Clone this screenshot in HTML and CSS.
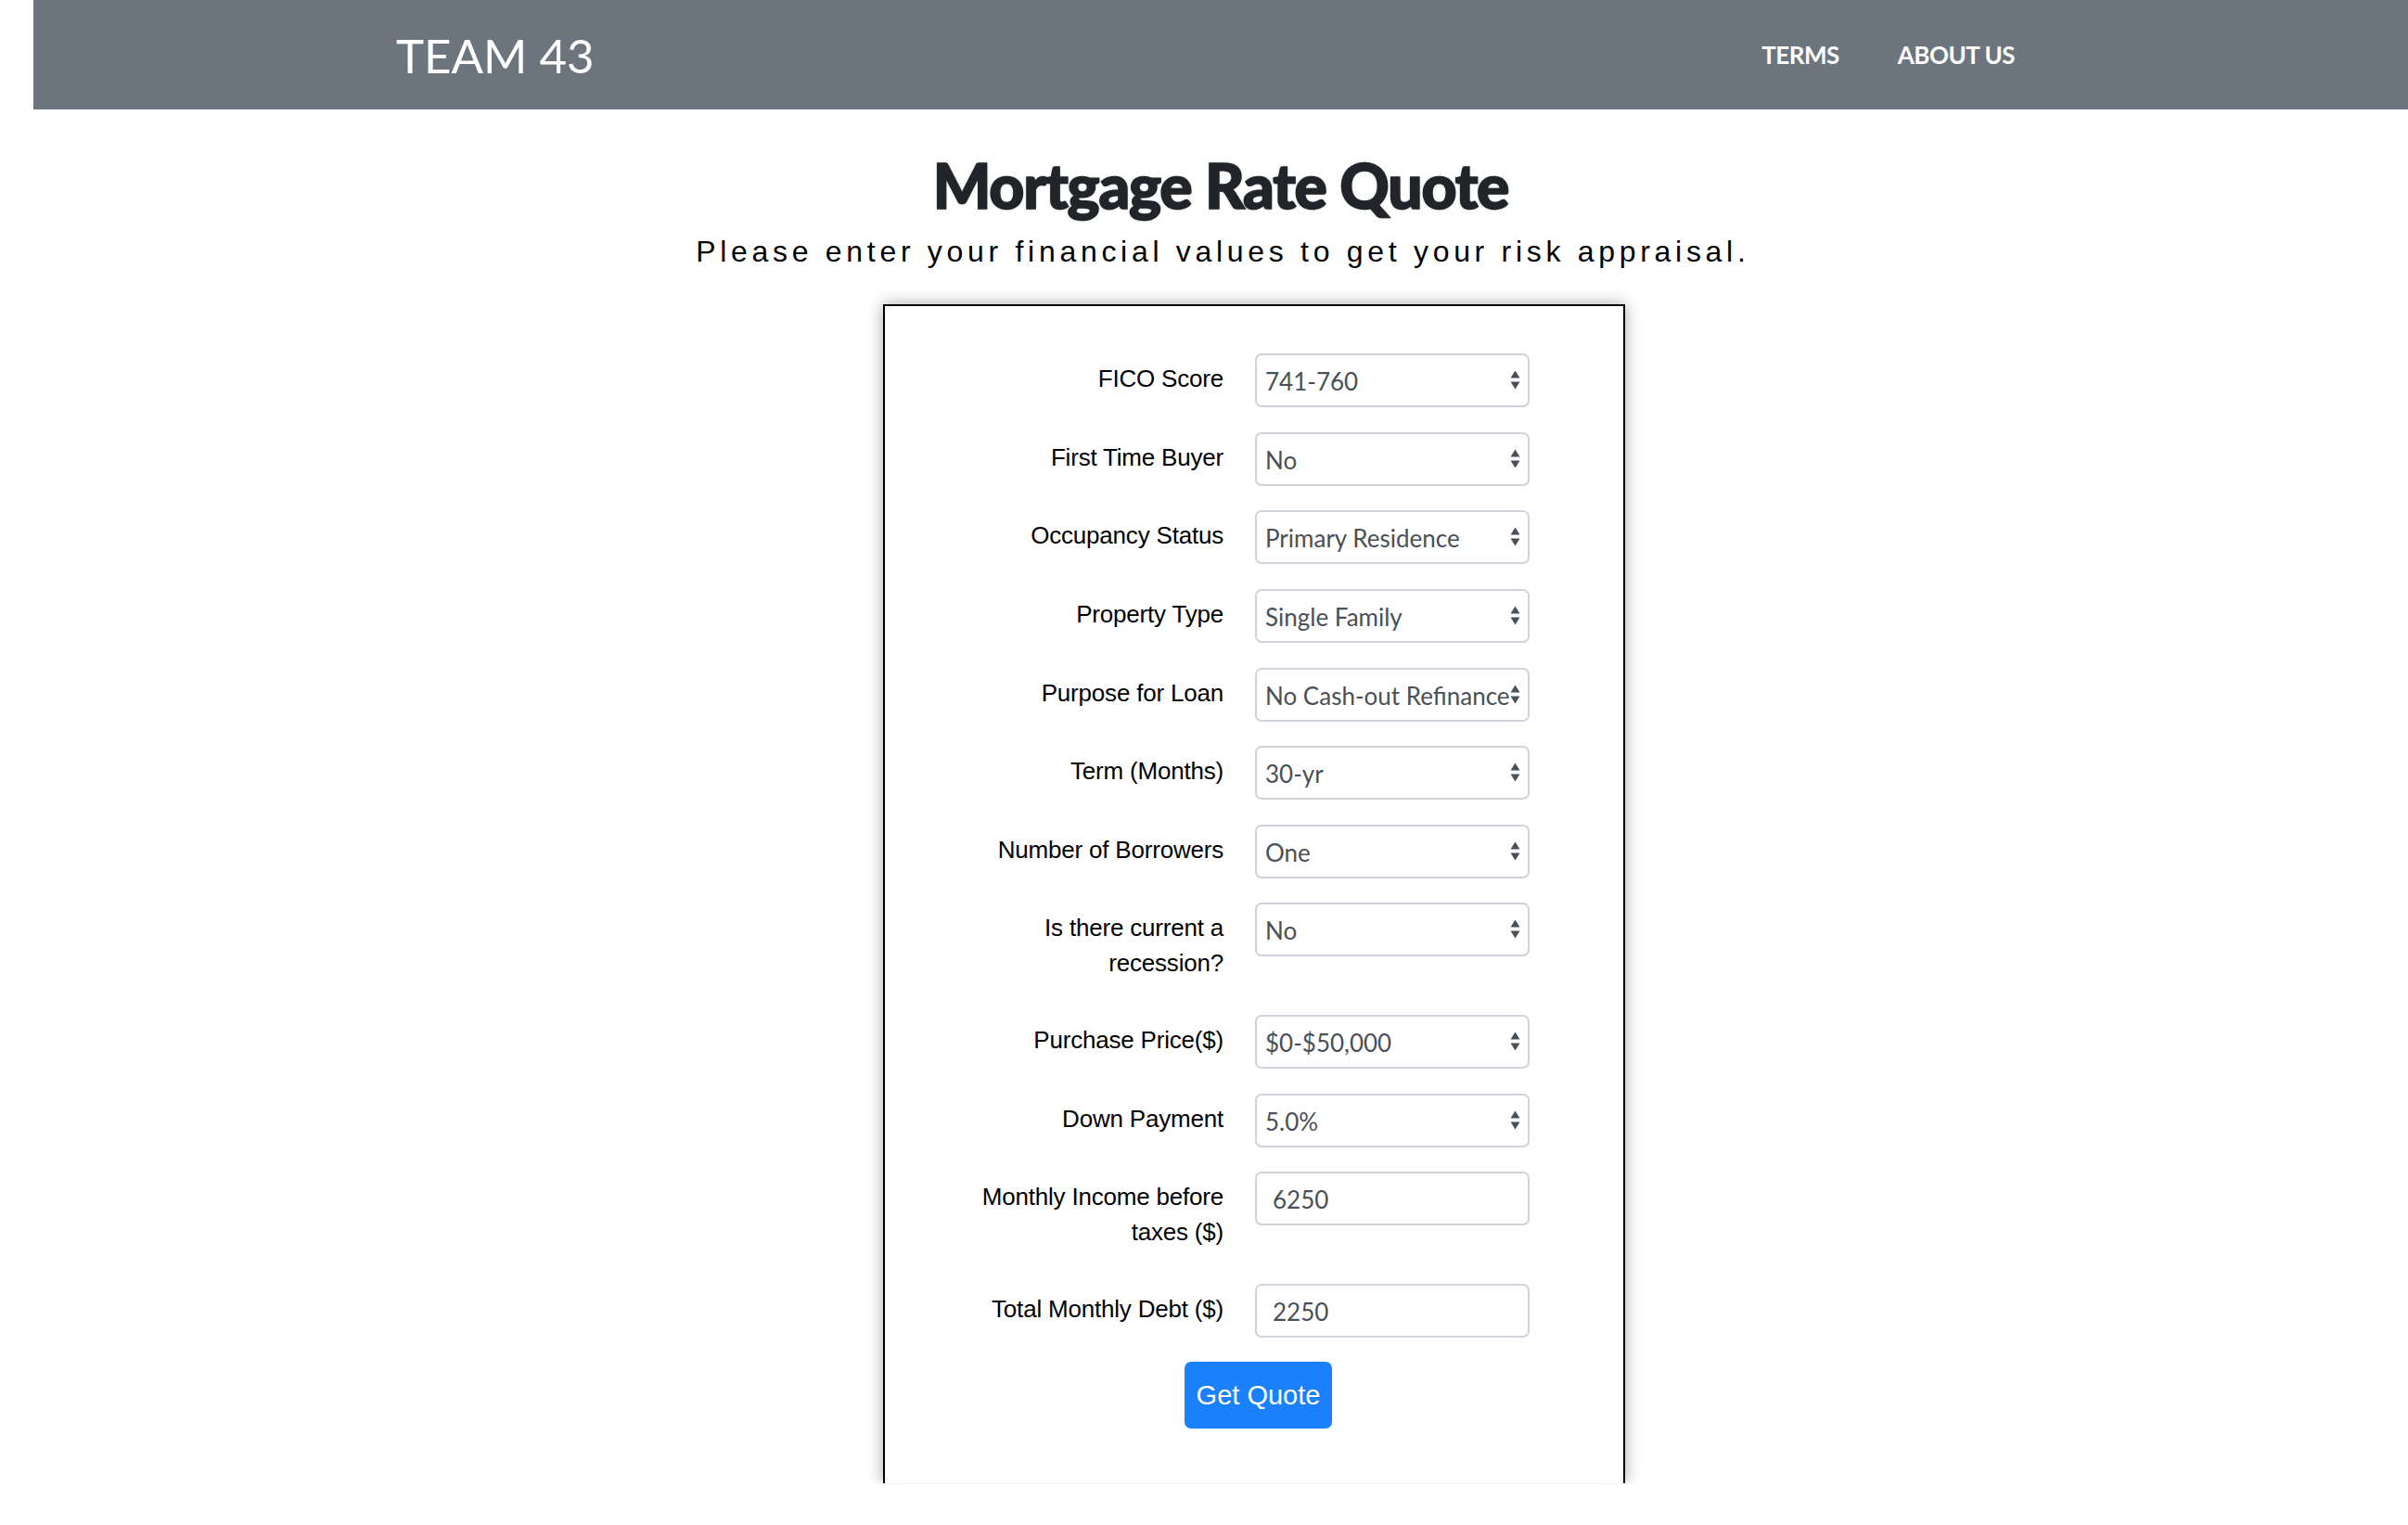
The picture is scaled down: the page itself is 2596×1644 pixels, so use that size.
FILE: index.html
```html
<!DOCTYPE html>
<html lang="en">
<head>
<meta charset="utf-8">
<title>Mortgage Rate Quote</title>
<link rel="stylesheet" href="styles.css">
</head>
<body>
<div class="page">
  <nav class="navbar">
    <a class="brand" href="#">TEAM 43</a>
    <div class="nav">
      <a href="#">TERMS</a>
      <a href="#">ABOUT US</a>
    </div>
  </nav>
  <header class="header">
    <h1 class="title">Mortgage Rate Quote</h1>
    <p class="lead">Please enter your financial values to get your risk appraisal.</p>
  </header>
  <form class="quote-box">
    <div class="row">
      <label class="lbl">FICO Score</label>
      <div class="sel"><select><option>741-760</option></select><svg class="arr" width="11" height="21" viewBox="0 0 11 21"><path d="M0.5 8.5 L5.5 0.5 L10.5 8.5 Z M0.5 12.5 L10.5 12.5 L5.5 20.5 Z"/></svg></div>
    </div>
    <div class="row">
      <label class="lbl">First Time Buyer</label>
      <div class="sel"><select><option>No</option></select><svg class="arr" width="11" height="21" viewBox="0 0 11 21"><path d="M0.5 8.5 L5.5 0.5 L10.5 8.5 Z M0.5 12.5 L10.5 12.5 L5.5 20.5 Z"/></svg></div>
    </div>
    <div class="row">
      <label class="lbl">Occupancy Status</label>
      <div class="sel"><select><option>Primary Residence</option></select><svg class="arr" width="11" height="21" viewBox="0 0 11 21"><path d="M0.5 8.5 L5.5 0.5 L10.5 8.5 Z M0.5 12.5 L10.5 12.5 L5.5 20.5 Z"/></svg></div>
    </div>
    <div class="row">
      <label class="lbl">Property Type</label>
      <div class="sel"><select><option>Single Family</option></select><svg class="arr" width="11" height="21" viewBox="0 0 11 21"><path d="M0.5 8.5 L5.5 0.5 L10.5 8.5 Z M0.5 12.5 L10.5 12.5 L5.5 20.5 Z"/></svg></div>
    </div>
    <div class="row">
      <label class="lbl">Purpose for Loan</label>
      <div class="sel"><select><option>No Cash-out Refinance</option></select><svg class="arr" width="11" height="21" viewBox="0 0 11 21"><path d="M0.5 8.5 L5.5 0.5 L10.5 8.5 Z M0.5 12.5 L10.5 12.5 L5.5 20.5 Z"/></svg></div>
    </div>
    <div class="row">
      <label class="lbl">Term (Months)</label>
      <div class="sel"><select><option>30-yr</option></select><svg class="arr" width="11" height="21" viewBox="0 0 11 21"><path d="M0.5 8.5 L5.5 0.5 L10.5 8.5 Z M0.5 12.5 L10.5 12.5 L5.5 20.5 Z"/></svg></div>
    </div>
    <div class="row">
      <label class="lbl">Number of Borrowers</label>
      <div class="sel"><select><option>One</option></select><svg class="arr" width="11" height="21" viewBox="0 0 11 21"><path d="M0.5 8.5 L5.5 0.5 L10.5 8.5 Z M0.5 12.5 L10.5 12.5 L5.5 20.5 Z"/></svg></div>
    </div>
    <div class="row">
      <label class="lbl">Is there current a recession?</label>
      <div class="sel"><select><option>No</option></select><svg class="arr" width="11" height="21" viewBox="0 0 11 21"><path d="M0.5 8.5 L5.5 0.5 L10.5 8.5 Z M0.5 12.5 L10.5 12.5 L5.5 20.5 Z"/></svg></div>
    </div>
    <div class="row">
      <label class="lbl">Purchase Price($)</label>
      <div class="sel"><select><option>$0-$50,000</option></select><svg class="arr" width="11" height="21" viewBox="0 0 11 21"><path d="M0.5 8.5 L5.5 0.5 L10.5 8.5 Z M0.5 12.5 L10.5 12.5 L5.5 20.5 Z"/></svg></div>
    </div>
    <div class="row">
      <label class="lbl">Down Payment</label>
      <div class="sel"><select><option>5.0%</option></select><svg class="arr" width="11" height="21" viewBox="0 0 11 21"><path d="M0.5 8.5 L5.5 0.5 L10.5 8.5 Z M0.5 12.5 L10.5 12.5 L5.5 20.5 Z"/></svg></div>
    </div>
    <div class="row">
      <label class="lbl">Monthly Income before taxes ($)</label>
      <input class="inp" type="text" value="6250">
    </div>
    <div class="row">
      <label class="lbl">Total Monthly Debt ($)</label>
      <input class="inp" type="text" value="2250">
    </div>
    <div class="actions">
      <button class="btn" type="button">Get Quote</button>
    </div>
  </form>
</div>
</body>
</html>
```
FILE: styles.css
```css
* { box-sizing: border-box; }

body {
  margin: 0;
  background: #fff;
  font-family: "Liberation Sans", Arial, sans-serif;
  color: #000;
}

.page {
  margin-left: 36px;
  height: 1644px;
  overflow: hidden;
}

.navbar {
  height: 118px;
  background: #6c757d;
  display: flex;
  align-items: center;
  justify-content: space-between;
  padding: 0 424px 0 391px;
}

.brand {
  font-family: Lato, "Open Sans", sans-serif;
  font-weight: 400;
  font-size: 51px;
  color: #fff;
  text-decoration: none;
  line-height: 1;
}

.nav {
  display: flex;
  gap: 63px;
}

.nav a {
  font-family: Lato, "Open Sans", sans-serif;
  font-weight: 700;
  font-size: 26px;
  color: #fff;
  text-decoration: none;
  letter-spacing: -0.5px;
}

.header {
  text-align: center;
  padding-top: 42px;
}

.title {
  margin: 0;
  font-family: Lato, "Open Sans", sans-serif;
  font-weight: 900;
  font-size: 66px;
  line-height: 1.2;
  color: #212529;
  letter-spacing: -1.2px;
  -webkit-text-stroke: 1.6px #212529;
  text-shadow: 0 0 3px rgba(0, 0, 0, 0.4);
}

.lead {
  margin: 13px 0 0;
  font-size: 32px;
  line-height: 38px;
  letter-spacing: 4.7px;
  padding-left: 4.7px;
  color: #000;
}

.quote-box {
  display: block;
  margin: 38px 0 0 916px;
  width: 800px;
  height: 1271px;
  border: 2px solid #000;
  border-bottom: none;
  box-shadow: 0 0 16px rgba(0, 0, 0, 0.35);
  clip-path: inset(-30px -30px 0 -30px);
  padding: 51px 0 0 65px;
}

.row {
  display: flex;
  align-items: flex-start;
  gap: 34px;
  margin-bottom: 26.6px;
}

.lbl {
  width: 300px;
  text-align: right;
  font-size: 26px;
  line-height: 38px;
  padding: 8px 0 10px;
  color: #000;
  letter-spacing: -0.2px;
}

.sel {
  position: relative;
  width: 296px;
  height: 58px;
}

.sel select {
  appearance: none;
  -webkit-appearance: none;
  width: 100%;
  height: 100%;
  border: 2px solid #ced4da;
  border-radius: 7px;
  background: #fff;
  padding: 2px 0 0 9px;
  font-family: Lato, "Open Sans", sans-serif;
  font-size: 26px;
  color: #495057;
}

.arr {
  position: absolute;
  right: 10px;
  top: 18px;
  fill: #495057;
}

.inp {
  width: 296px;
  height: 58px;
  border: 2px solid #ced4da;
  border-radius: 7px;
  padding: 2px 0 0 17px;
  font-family: Lato, "Open Sans", sans-serif;
  font-size: 26px;
  color: #495057;
  background: #fff;
}

.actions {
  padding-left: 258px;
}

.btn {
  width: 159px;
  height: 72px;
  border: none;
  border-radius: 7px;
  background: #1a80fb;
  color: #fff;
  font-family: "Liberation Sans", Arial, sans-serif;
  font-size: 29px;
  padding: 0;
}
```
